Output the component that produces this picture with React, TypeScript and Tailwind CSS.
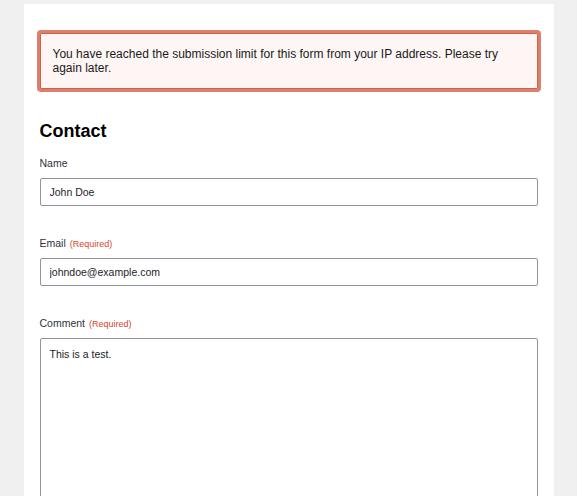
import React, { useState } from 'react'

const fontStack = { fontFamily: '"Liberation Sans", Arial, sans-serif' }

interface FieldProps {
  label: string
  required?: boolean
  children: React.ReactNode
}

const Field: React.FC<FieldProps> = ({ label, required, children }) => (
  <div className="mt-[30px] first:mt-[14px]">
    <label className="flex h-[14px] items-baseline gap-1 overflow-visible text-[10.5px] leading-[14px] text-[#2f3338]">
      {label}
      {required && <span className="text-[9px] leading-[14px] text-[#d2452f]">(Required)</span>}
    </label>
    <div className="mt-2">{children}</div>
  </div>
)

const App: React.FC = () => {
  const [form, setForm] = useState({
    name: 'John Doe',
    email: 'johndoe@example.com',
    comment: 'This is a test.'
  })

  const inputCls =
    'w-full h-[28px] px-[9px] border border-[#8f959b] rounded-[2px] bg-white text-[10.5px] text-[#1d2327] outline-none'

  return (
    <div className="min-h-screen bg-[#f0f0f0] pt-1" style={fontStack}>
      <div className="mx-auto w-[530px] bg-white px-4 pt-[26px] pb-10">
        {/* Validation error */}
        <div className="-mx-[3px] rounded-[4px] border-[3px] border-[#de7f6b] bg-[#fdf6f5] px-[13px] py-[14px] shadow-[inset_0_0_0_1px_#d0614b]">
          <p className="text-[12px] leading-[14px] text-[#1a1a1a]">
            You have reached the submission limit for this form from your IP address. Please try again later.
          </p>
        </div>

        <h2 className="mt-[28px] text-[18px] leading-[22px] font-bold text-black">Contact</h2>

        <form>
          <Field label="Name">
            <input
              className={inputCls}
              value={form.name}
              onChange={(e) => setForm({ ...form, name: e.target.value })}
            />
          </Field>
          <Field label="Email" required>
            <input
              className={inputCls}
              value={form.email}
              onChange={(e) => setForm({ ...form, email: e.target.value })}
            />
          </Field>
          <Field label="Comment" required>
            <textarea
              className="block w-full h-[240px] px-[9px] py-[8px] border border-[#8f959b] rounded-[2px] bg-white text-[10.5px] leading-[14px] text-[#1d2327] outline-none resize-none"
              value={form.comment}
              onChange={(e) => setForm({ ...form, comment: e.target.value })}
            />
          </Field>
        </form>
      </div>
    </div>
  )
}

export default App
